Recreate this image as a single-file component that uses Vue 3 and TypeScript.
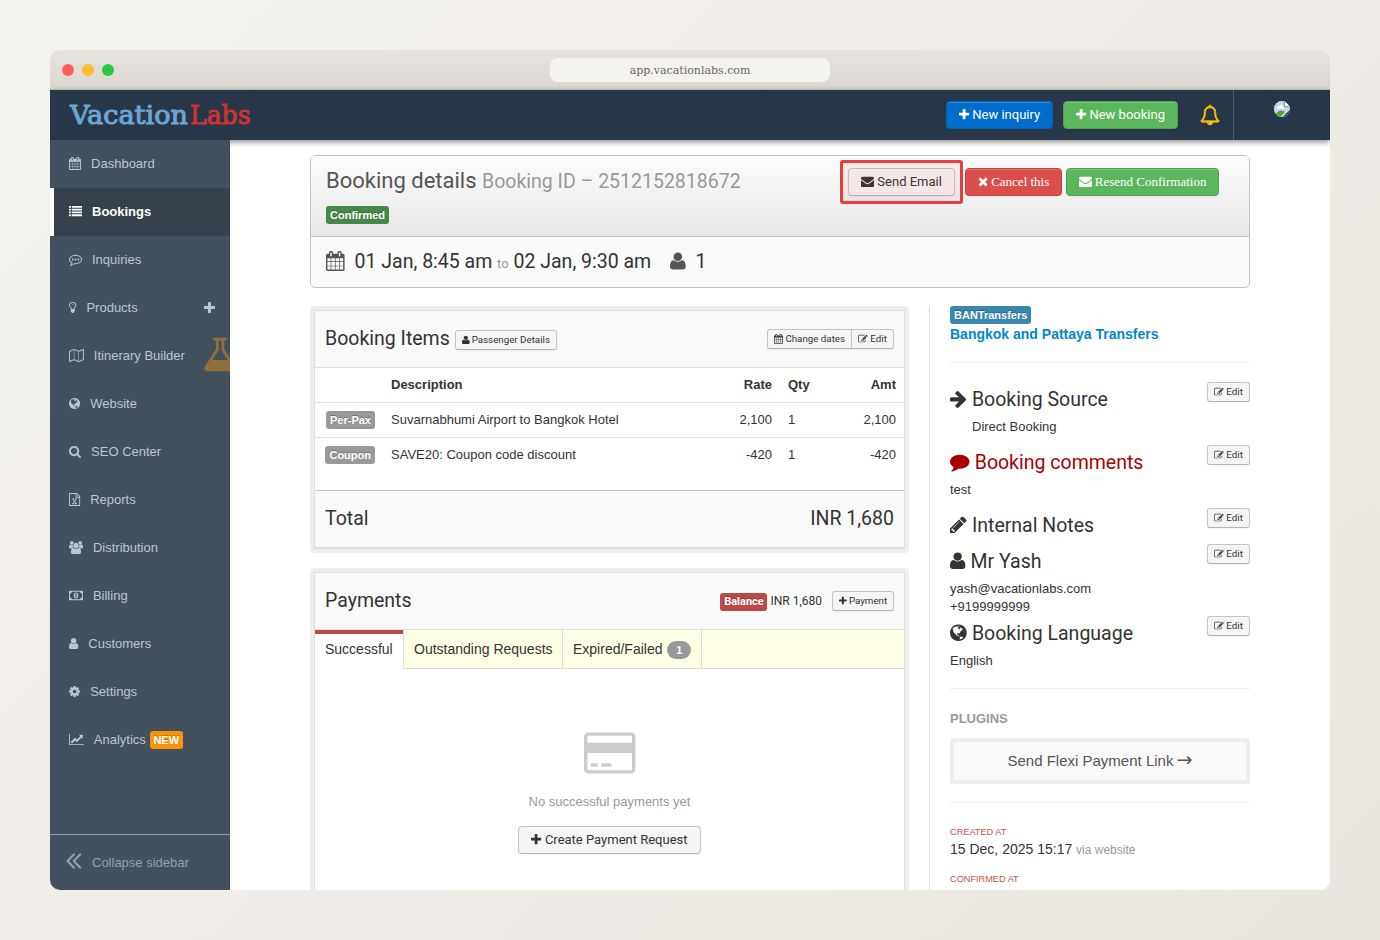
<script setup lang="ts">
import { h, type FunctionalComponent } from 'vue'

interface Glyph { x: number; w: number; d: string; rule?: 'evenodd' }

const glyphs: Record<string, Glyph> = {
  plus: { x: 192, w: 1408, d: 'M1600 736v192q0 40-28 68t-68 28h-416v416q0 40-28 68t-68 28h-192q-40 0-68-28t-28-68v-416h-416q-40 0-68-28t-28-68v-192q0-40 28-68t68-28h416v-416q0-40 28-68t68-28h192q40 0 68 28t28 68v416h416q40 0 68 28t28 68z' },
  envelope: { x: 0, w: 1792, d: 'M1792 710v794q0 66-47 113t-113 47h-1472q-66 0-113-47t-47-113v-794q44 49 101 87 362 246 497 345 57 42 92.5 65.5t94.5 48 110 24.5h2q51 0 110-24.5t94.5-48 92.5-65.5q170-123 498-345 57-39 100-87zm0-294q0 79-49 151t-122 123q-376 261-468 325-10 7-42.5 31t-54 38.5-52 32.5-57.5 27-50 9h-2q-23 0-50-9t-57.5-27-52-32.5-54-38.5-42.5-31q-91-64-262-182.5t-205-142.5q-62-42-117-115.5t-55-136.5q0-78 41.5-130t118.5-52h1472q65 0 112.5 47t47.5 113z' },
  times: { x: 192, w: 1408, d: 'M1490 1322q0 40-28 68l-136 136q-28 28-68 28t-68-28l-294-294-294 294q-28 28-68 28t-68-28l-136-136q-28-28-28-68t28-68l294-294-294-294q-28-28-28-68t28-68l136-136q28-28 68-28t68 28l294 294 294-294q28-28 68-28t68 28l136 136q28 28 28 68t-28 68l-294 294 294 294q28 28 28 68z' },
  user: { x: 256, w: 1280, d: 'M1536 1399q0 109-62.5 187t-150.5 78h-854q-88 0-150.5-78t-62.5-187q0-85 8.5-160.5t31.5-152 58.5-131 94-89 134.5-34.5q131 128 313 128t313-128q76 0 134.5 34.5t94 89 58.5 131 31.5 152 8.5 160.5zm-256-887q0 159-112.5 271.5t-271.5 112.5-271.5-112.5-112.5-271.5 112.5-271.5 271.5-112.5 271.5 112.5 112.5 271.5z' },
  person: { x: 256, w: 1408, d: 'M1664 1405q0 120-73 189.500t-194 69.500h-874q-121 0-194-69.500t-73-189.500q0-53 3.500-103.500t14-109 26.500-108.500 43-97.500 62-81 85.500-53.500 111.500-20q9 0 42 21.500t74.500 48 108 48 133.500 21.500 133.500-21.500 108-48 74.500-48 42-21.500q61 0 111.500 20t85.500 53.500 62 81 43 97.500 26.500 108.500 14 109 3.500 103.500zm-320-893q0 159-112.500 271.500t-271.500 112.500-271.500-112.500-112.500-271.500 112.500-271.500 271.500-112.500 271.500 112.500 112.500 271.500z' },
  calendar: { x: 64, w: 1664, d: 'M192 1664h288v-288h-288v288zm352 0h320v-288h-320v288zm-352-352h288v-320h-288v320zm352 0h320v-320h-320v320zm-352-384h288v-288h-288v288zm736 736h320v-288h-320v288zm-384-736h320v-288h-320v288zm768 736h288v-288h-288v288zm-384-352h320v-320h-320v320zm-352-864v-288q0-13-9.5-22.5t-22.5-9.5h-64q-13 0-22.5 9.5t-9.5 22.5v288q0 13 9.5 22.5t22.5 9.5h64q13 0 22.5-9.5t9.5-22.5zm736 864h288v-320h-288v320zm-384-384h320v-288h-320v288zm384 0h288v-288h-288v288zm32-480v-288q0-13-9.5-22.5t-22.5-9.5h-64q-13 0-22.5 9.5t-9.5 22.5v288q0 13 9.5 22.5t22.5 9.5h64q13 0 22.5-9.5t9.5-22.5zm384-64v1280q0 52-38 90t-90 38h-1408q-52 0-90-38t-38-90v-1280q0-52 38-90t90-38h128v-96q0-66 47-113t113-47h64q66 0 113 47t47 113v96h384v-96q0-66 47-113t113-47h64q66 0 113 47t47 113v96h128q52 0 90 38t38 90z' },
  list: { x: 0, w: 1792, d: 'M0 1280h256v256H0zM0 896h256v256H0zM0 512h256v256H0zM384 1280h1408v256H384zM0 128h256v256H0zM384 896h1408v256H384zM384 512h1408v256H384zM384 128h1408v256H384z' },
  commenting: { x: 0, w: 1792, d: 'M640 896q0 53-37.5 90.5t-90.5 37.5-90.5-37.5-37.5-90.5 37.5-90.5 90.5-37.5 90.5 37.5 37.5 90.5zm384 0q0 53-37.5 90.5t-90.5 37.5-90.5-37.5-37.5-90.5 37.5-90.5 90.5-37.5 90.5 37.5 37.5 90.5zm384 0q0 53-37.5 90.5t-90.5 37.5-90.5-37.5-37.5-90.5 37.5-90.5 90.5-37.5 90.5 37.5 37.5 90.5zm-512-512q-204 0-381.5 69.5t-282 187.5-104.5 255q0 112 71.5 213.5t201.5 175.5l87 50-27 96q-24 91-70 172 152-63 275-171l43-38 57 6q69 8 130 8 204 0 381.5-69.5t282-187.5 104.5-255-104.5-255-282-187.5-381.5-69.5zm896 512q0 174-120 321.5t-326 233-450 85.5q-70 0-145-8-198 175-460 242-49 14-114 22h-5q-15 0-27-10.5t-16-27.5v-1q-3-4-.5-12t2-10 4.5-9.5l6-9 7-8.5 8-9q7-8 31-34.5t34.5-38 31-39.5 32.5-51 27-59 26-76q-157-89-247.5-220t-90.5-281q0-174 120-321.5t326-233 450-85.5 450 85.5 326 233 120 321.5z' },
  comment: { x: 0, w: 1792, d: 'M1792 896q0 174-120 321.5t-326 233-450 85.5q-70 0-145-8-198 175-460 242-49 14-114 22-17 2-30.5-9t-17.5-29v-1q-3-4-.5-12t2-10 4.5-9.5l6-9 7-8.5 8-9q7-8 31-34.5t34.5-38 31-39.5 32.5-51 27-59 26-76q-157-89-247.5-220t-90.5-281q0-130 71-248.5t191-204.5 286-136.5 348-50.5q244 0 450 85.5t326 233 120 321.5z' },
  bulb: { x: 384, w: 1024, d: 'M1120 576q0 13-9.5 22.5t-22.5 9.5-22.5-9.5-9.5-22.5q0-46-54-71t-106-25q-13 0-22.5-9.5t-9.5-22.5 9.5-22.5 22.5-9.5q50 0 99.5 16t87 54 37.5 90zm160 0q0-72-34.5-134t-90-101.5-123-62-136.5-22.5-136.5 22.5-123 62-90 101.5-34.5 134q0 101 68 180 10 11 30.5 33t30.5 33q128 153 141 298h228q13-145 141-298 10-11 30.5-33t30.5-33q68-79 68-180zm128 0q0 155-103 268-45 49-74.5 87t-59.5 95.5-34 107.5q47 28 47 82 0 37-25 64 25 27 25 64 0 52-45 81 13 23 13 47 0 46-31.5 71t-77.5 25q-20 44-60 70t-87 26-87-26-60-70q-46 0-77.5-25t-31.5-71q0-24 13-47-45-29-45-81 0-37 25-64-25-27-25-64 0-54 47-82-4-50-34-107.5t-59.5-95.5-74.5-87q-103-113-103-268 0-99 44.5-184.5t117-142 164-89 186.5-32.5 186.5 32.5 164 89 117 142 44.5 184.5z' },
  map: { x: 0, w: 2048, rule: 'evenodd', d: 'M2020 11q28 20 28 53v1408q0 20-11 36t-29 23l-640 256q-24 11-48 0l-616-246-616 246q-10 5-24 5-19 0-36-11-28-20-28-53V320q0-20 11-36t29-23L680 5q24-11 48 0l616 246L1960 5q32-13 60 6zM736 146v1270l576 230V376zM128 363v1270l544-217V146zM1920 1429V159l-544 217v1270z' },
  globe: { x: 128, w: 1536, d: 'M896 128q209 0 385.5 103t279.5 279.5 103 385.5-103 385.5-279.5 279.5-385.5 103-385.5-103-279.5-279.5-103-385.5 103-385.5 279.5-279.5 385.5-103zm274 521q-2 1-9.5 9.5t-13.5 9.5q2 0 4.5-5t5-11 3.5-7q6-7 22-15 14-6 52-12 34-8 51 11-2-2 9.5-13t14.5-12q3-2 15-4.5t15-7.5l2-22q-12 1-17.5-7t-6.5-21q0 2-6 8 0-7-4.5-8t-11.5 1-9 1q-10-3-15-7.5t-8-16.5-4-15q-2-5-9.5-11t-9.5-10q-1-2-2.5-5.5t-3-6.5-4-5.5-5.5-2.5-7 5-7.5 10-4.5 5q-3-2-6-1.5t-4.5 1-4.5 3-5 3.5q-3 2-8.5 3t-8.5 2q15-5-1-11-10-4-16-3 9-4 7.5-12t-8.5-14h5q-1-4-8.5-8.5t-17.5-8.5-13-6q-8-5-34-9.5t-33-.5q-5 6-4.5 10.5t4 14 3.5 12.5q1 6-5.5 13t-6.5 12q0 7 14 15.5t10 21.5q-3 8-16 16t-16 12q-5 8-1.5 18.5t10.5 16.5q2 2 1.5 4t-3.5 4.5-5.5 4-6.5 3.5l-3 2q-11 5-20.5-6t-13.5-26q-7-25-16-30-23-8-29 1-5-13-41-26-25-9-58-4 6-1 0-15-7-15-19-12 3-6 4-17.5t1-13.5q3-13 12-23 1-1 7-8.5t9.5-13.5.5-6q35 4 50-11 5-5 11.5-17t10.5-17q9-6 14-5.5t14.5 5.5 14.5 5q14 1 15.5-11t-7.5-20q12 1 3-17-4-7-8-9-12-4-27 5-8 4 2 8-1-1-9.5 10.5t-16.5 17.5-16-5q-1-1-5.5-13.5t-9.5-13.5q-8 0-16 15 3-8-11-15t-24-8q19-12-8-27-7-4-20.5-5t-19.5 4q-5 7-5.5 11.5t5 8 10.5 5.5 11.5 4 8.5 3q14 10 8 14-2 1-8.5 3.5t-11.5 4.5-6 4q-3 4 0 14t-2 14q-5-5-9-17.5t-7-16.5q7 9-25 6l-10-1q-4 0-16 2t-20.5 1-13.5-8q-4-8 0-20 1-4 4-2-4-3-11-9.5t-10-8.5q-46 15-94 41 6 1 12-1 5-2 13-6.5t10-5.5q34-14 42-7l5-5q14 16 20 25-7-4-30-1-20 6-22 12 7 12 5 18-4-3-11.5-10t-14.5-11-15-5q-16 0-22 1-146 80-235 222 7 7 12 8 4 1 5 9t2.5 11 11.5-3q9 8 3 19 1-1 44 27 19 17 21 21 3 11-10 18-1-2-9-9t-9-4q-3 5 .5 18.5t10.5 12.5q-7 0-9.5 16t-2.5 35.5-1 23.5l2 1q-3 12 5.5 34.5t21.5 19.5q-13 3 20 43 6 8 8 9 3 2 12 7.5t15 10 10 10.5q4 5 10 22.5t14 23.5q-2 6 9.5 20t10.5 23q-1 0-2.5 1t-2.5 1q3 7 15.5 14t15.5 13q1 3 2 10t3 11 8 2q2-20-24-62-15-25-17-29-3-5-5.5-15.5t-4.5-14.5q2 0 6 1.5t8.5 3.5 7.5 4 2 3q-3 7 2 17.5t12 18.5 17 19 12 13q6 6 14 19.5t0 13.5q9 0 20 10.5t17 19.5q5 8 8 26t5 24q2 7 8.5 13.5t12.5 9.5l16 8 13 7q5 2 18.5 10.5t21.5 11.5q10 4 16 4t14.5-2.5 13.5-3.5q15-2 29 15t21 21q36 19 55 11-2 1 .5 7.5t8 15.5 9 14.5 5.5 8.5q5 6 18 15t18 15q6-4 7-9-3 8 7 20t18 10q14-3 14-32-31 15-49-18 0-1-2.5-5.5t-4-8.5-2.5-8.5 0-7.5 5-3q9 0 10-3.5t-2-12.5-4-13q-1-8-11-20t-12-15q-5 9-16 8t-16-9q0 1-1.5 5.5t-1.5 6.5q-13 0-15-1 1-3 2.5-17.5t3.5-22.5q1-4 5.5-12t7.5-14.5 4-12.5-4.5-9.5-17.5-2.5q-19 1-26 20-1 3-3 10.5t-5 11.5-9 7q-7 3-24 2t-24-5q-13-8-22.5-29t-9.5-37q0-10 2.5-26.5t3-25-5.5-24.5q3-2 9-9.5t10-10.5q2-1 4.5-1.5t4.5 0 4-1.5 3-6q-1-1-4-3-3-3-4-3 7 3 28.5-1.5t27.5 1.5q15 11 22-2 0-1-2.5-9.5t-.5-13.5q5 27 29 9 3 3 15.5 5t17.5 5q3 2 7 5.5t5.5 4.5 5-.5 8.5-6.5q10 14 12 24 11 40 19 44 7 3 11 2t4.5-9.5 0-14-1.5-12.5l-1-8v-18l-1-8q-15-3-18.5-12t1.5-18.5 15-18.5q1-1 8-3.5t15.5-6.5 12.5-8q21-19 15-35 7 0 11-9-1 0-5-3t-7.5-5-4.5-2q9-5 2-16 5-3 7.5-11t7.5-10q9 12 21 2 8-8 1-16 5-7 20.5-10.5t18.5-9.5q7 2 8-2t1-12 3-12q4-5 15-9t13-5l17-11q3-4 0-4 18 2 31-11 10-11-6-20 3-6-3-9.5t-15-5.5q3-1 11.5-.5t10.5-1.5q15-10-7-16-17-5-43 12zm-163 877q206-36 351-189-3-3-12.5-4.5t-12.5-3.5q-18-7-24-8 1-7-2.5-13t-8-9-12.5-8-11-7q-2-2-7-6t-7-5.5-7.5-4.5-8.5-2-10 1l-3 1q-3 1-5.5 2.5t-5.5 3-4 3 0 2.5q-21-17-36-22-5-1-11-5.5t-10.5-7-10-1.5-11.5 7q-5 5-6 15t-2 13q-7-5 0-17.5t2-18.5q-3-6-10.5-4.5t-12 4.5-11.5 8.5-9 6.5-8.5 5.5-8.5 7.5q-3 4-6 12t-5 11q-2-4-11.5-6.5t-9.5-5.5q2 10 4 35t5 38q7 31-12 48-27 25-29 40-4 22 12 26 0 7-8 20.5t-7 21.5q0 6 2 16z' },
  search: { x: 64, w: 1664, d: 'M1216 832q0-185-131.5-316.5t-316.5-131.5-316.5 131.5-131.5 316.5 131.5 316.5 316.5 131.5 316.5-131.5 131.5-316.5zm512 832q0 52-38 90t-90 38q-54 0-90-38l-343-342q-179 124-399 124-143 0-273.5-55.5t-225-150-150-225-55.5-273.5 55.5-273.5 150-225 225-150 273.5-55.5 273.5 55.5 225 150 150 225 55.5 273.5q0 220-124 399l343 343q37 37 37 90z' },
  excel: { x: 128, w: 1536, rule: 'evenodd', d: 'M1596 380q28 28 48 76t20 88v1152q0 40-28 68t-68 28H224q-40 0-68-28t-28-68V96q0-40 28-68t68-28h896q40 0 88 20t76 48zM1152 136v376h376q-10-29-22-41l-313-313q-12-12-41-22zM1536 1664V640h-416q-40 0-68-28t-28-68V128H256v1536zM555 1430v106h281v-106h-75l103-161q5-7 10-16.5t7.5-13.5 3.5-4h2q1 4 5 10 2 4 4.5 7.5t6 8 6.5 8.5l107 161h-76v106h291v-106h-68l-192-273 195-282h67V768H953v107h74l-103 159q-4 7-10 16.5t-9 13.5l-2 3h-2q-1-4-5-10-6-11-17-23L772 875h76V768H557v107h68l189 272-194 283z' },
  group: { x: 0, w: 1920, d: 'M593 896q-162 5-265 128h-134q-82 0-138-40.5t-56-118.5q0-353 124-353 6 0 43.5 21t97.5 42.5 119 21.5q67 0 133-23-5 37-5 66 0 159 93 290zm1071 637q0 120-73 189.5t-194 69.5h-874q-121 0-194-69.5t-73-189.5q0-53 3.5-103.5t14-109 26.5-108.5 43-97.5 62-81 85.5-53.5 111.5-20q10 0 43 21.5t73 48 107 48 135 21.5 135-21.5 107-48 73-48 43-21.5q61 0 111.5 20t85.5 53.5 62 81 43 97.5 26.5 108.5 14 109 3.5 103.5zm-1024-1277q0 106-75 181t-181 75-181-75-75-181 75-181 181-75 181 75 75 181zm704 384q0 159-112.5 271.5t-271.5 112.5-271.5-112.5-112.5-271.5 112.5-271.5 271.5-112.5 271.5 112.5 112.5 271.5zm576 225q0 78-56 118.5t-138 40.5h-134q-103-123-265-128 93-131 93-290 0-29-5-66 66 23 133 23 59 0 119-21.5t97.5-42.5 43.5-21q124 0 124 353zm-128-609q0 106-75 181t-181 75-181-75-75-181 75-181 181-75 181 75 75 181z' },
  money: { x: 0, w: 1920, rule: 'evenodd', d: 'M768 1152h384v-96h-128V608H910L762 745l77 80q42-37 55-57h2v288H768zM1280 896q0 70-21 142t-59.5 134-101.5 101-138 39-138-39-101.5-101T661 1038t-21-142 21-142 59.5-134T822 519t138-39 138 39 101.5 101T1259 754t21 142zM1792 1152V640q-106 0-181-75t-75-181H384q0 106-75 181t-181 75v512q106 0 181 75t75 181h1152q0-106 75-181t181-75zM1920 320v1152q0 26-19 45t-45 19H64q-26 0-45-19t-19-45V320q0-26 19-45t45-19h1792q26 0 45 19t19 45z' },
  cog: { x: 128, w: 1536, d: 'M1152 896q0-106-75-181t-181-75-181 75-75 181 75 181 181 75 181-75 75-181zm512-109v222q0 12-8 23t-20 13l-185 28q-19 54-39 91 35 50 107 138 10 12 10 25t-9 23q-27 37-99 108t-94 71q-12 0-26-9l-138-108q-44 23-91 38-16 136-29 186-7 28-36 28h-222q-14 0-24.5-8.5t-11.5-21.5l-28-184q-49-16-90-37l-141 107q-10 9-25 9-14 0-25-11-126-114-165-168-7-10-7-23 0-12 8-23 15-21 51-66.5t54-70.5q-27-50-41-99l-183-27q-13-2-21-12.5t-8-23.5v-222q0-12 8-23t19-13l186-28q14-46 39-92-40-57-107-138-10-12-10-24 0-10 9-23 26-36 98.5-107.5t94.5-71.5q13 0 26 10l138 107q44-23 91-38 16-136 29-186 7-28 36-28h222q14 0 24.5 8.5t11.5 21.5l28 184q49 16 90 37l142-107q9-9 24-9 13 0 25 10 129 119 165 170 7 8 7 22 0 12-8 23-15 21-51 66.5t-54 70.5q26 50 41 98l183 28q13 2 21 12.5t8 23.5z' },
  chart: { x: 0, w: 2048, d: 'M2048 1536v128h-2048v-1536h128v1408h1920zm-128-1248v435q0 21-19.5 29.5t-35.5-7.5l-121-121-633 633q-10 10-23 10t-23-10l-233-233-416 416-192-192 585-585q10-10 23-10t23 10l233 233 464-464-121-121q-16-16-7.5-35.5t29.5-19.5h435q14 0 23 9t9 23z' },
  edit: { x: 0, w: 1792, d: 'M888 1184l116-116-152-152-116 116v56h96v96h56zm440-720q-16-16-33 1l-350 350q-17 17-1 33t33-1l350-350q17-17 1-33zm80 594v190q0 119-84.5 203.5t-203.5 84.5h-832q-119 0-203.5-84.5t-84.5-203.5v-832q0-119 84.5-203.5t203.5-84.5h832q63 0 117 25 15 7 18 23 3 17-9 29l-49 49q-14 14-32 8-23-6-45-6h-832q-66 0-113 47t-47 113v832q0 66 47 113t113 47h832q66 0 113-47t47-113v-126q0-13 9-22l64-64q15-15 35-7t20 29zm-96-738l288 288-672 672h-288v-288zm444 132l-92 92-288-288 92-92q28-28 68-28t68 28l152 152q28 28 28 68t-28 68z' },
  arrow: { x: 128, w: 1536, d: 'M1600 960q0 54-37 91l-651 651q-39 37-91 37-51 0-90-37l-75-75q-38-38-38-91t38-91l293-293h-704q-52 0-84.5-37.5t-32.5-90.5v-128q0-53 32.5-90.5t84.5-37.5h704l-293-294q-38-36-38-90t38-90l75-75q38-38 90-38 53 0 91 38l651 651q37 35 37 90z' },
  pencil: { x: 128, w: 1536, d: 'M491 1536l91-91-235-235-91 91v107h128v128h107zm523-928q0-22-22-22-10 0-17 7l-542 542q-7 7-7 17 0 22 22 22 10 0 17-7l542-542q7-7 7-17zm-54-192l416 416-832 832h-416v-416zm683 96q0 53-37 90l-166 166-416-416 166-165q36-38 90-38 53 0 91 38l235 234q37 39 37 91z' },
  bell: { x: 0, w: 1792, d: 'M912 1696q0-16-16-16-59 0-101.5-42.5t-42.5-101.5q0-16-16-16t-16 16q0 73 51.5 124.5t124.5 51.5q16 0 16-16zm-666-288h1300q-266-300-266-832 0-51-24-105t-69-103-121.5-80.5-169.5-31.5-169.5 31.5-121.5 80.5-69 103-24 105q0 532-266 832zm1482 0q0 52-38 90t-90 38h-448q0 106-75 181t-181 75-181-75-75-181h-448q-52 0-90-38t-38-90q50-42 91-88t85-119.5 74.5-158.5 50-206 19.5-260q0-152 117-282.5t307-158.5q-8-19-8-39 0-40 28-68t68-28 68 28 28 68q0 20-8 39 190 28 307 158.5t117 282.5q0 139 19.5 260t50 206 74.5 158.5 85 119.5 91 88z' },
  flask: { x: 64, w: 1664, d: 'M1591 1448q56 89 21.5 152.5t-140.5 63.5h-1152q-106 0-140.5-63.5t21.5-152.5l503-793v-399h-64q-26 0-45-19t-19-45 19-45 45-19h512q26 0 45 19t19 45-19 45-45 19h-64v399zm-779-725l-272 429h712l-272-429-20-31v-436h-128v436z' },
  card: { x: 0, w: 1920, rule: 'evenodd', d: 'M1760 128q66 0 113 47t47 113v1216q0 66-47 113t-113 47H160q-66 0-113-47T0 1504V288q0-66 47-113t113-47zM160 256q-13 0-22.5 9.5T128 288v224h1664V288q0-13-9.5-22.5T1760 256zM1760 1536q13 0 22.5-9.5t9.5-22.5V896H128v608q0 13 9.5 22.5t22.5 9.5zM256 1408v-128h256v128zM640 1408v-128h384v128z' },
}

const Icon: FunctionalComponent<{ name: string }> = (props) => {
  const g = glyphs[props.name]
  return h('svg', { class: 'icon', viewBox: `${g.x} 0 ${g.w} 1792`, width: `${g.w / 1792}em`, height: '1em', 'aria-hidden': 'true' }, [
    h('path', { d: g.d, fill: 'currentColor', 'fill-rule': g.rule ?? 'nonzero' }),
  ])
}
Icon.props = ['name']

interface NavItem { icon: string; label: string; active?: boolean; badge?: string; expandable?: boolean; beta?: boolean }
const nav: NavItem[] = [
  { icon: 'calendar', label: 'Dashboard' },
  { icon: 'list', label: 'Bookings', active: true },
  { icon: 'commenting', label: 'Inquiries' },
  { icon: 'bulb', label: 'Products', expandable: true },
  { icon: 'map', label: 'Itinerary Builder', beta: true },
  { icon: 'globe', label: 'Website' },
  { icon: 'search', label: 'SEO Center' },
  { icon: 'excel', label: 'Reports' },
  { icon: 'group', label: 'Distribution' },
  { icon: 'money', label: 'Billing' },
  { icon: 'user', label: 'Customers' },
  { icon: 'cog', label: 'Settings' },
  { icon: 'chart', label: 'Analytics', badge: 'NEW' },
]

const items = [
  { kind: 'Per-Pax', description: 'Suvarnabhumi Airport to Bangkok Hotel', rate: '2,100', qty: 1, amount: '2,100' },
  { kind: 'Coupon', description: 'SAVE20: Coupon code discount', rate: '-420', qty: 1, amount: '-420' },
]

const sections = [
  { icon: 'arrow', title: 'Booking Source', lines: ['Direct Booking'], kind: 'indented spaced' },
  { icon: 'comment', title: 'Booking comments', lines: ['test'], kind: 'alert spaced' },
  { icon: 'pencil', title: 'Internal Notes', lines: [], kind: '' },
  { icon: 'person', title: 'Mr Yash', lines: ['yash@vacationlabs.com', '+9199999999'], kind: '' },
  { icon: 'globe', title: 'Booking Language', lines: ['English'], kind: '' },
]
</script>

<template>
  <div class="stage">
    <div class="window">
      <div class="titlebar">
        <div class="lights"><i class="red"></i><i class="amber"></i><i class="green"></i></div>
        <div class="address">app.vacationlabs.com</div>
      </div>

      <header class="topbar">
        <svg class="logo" width="190" height="34" viewBox="0 0 190 34" aria-label="VacationLabs">
          <text class="logo-a" x="1" y="25.500" textLength="118" lengthAdjust="spacingAndGlyphs">Vacation</text>
          <text class="logo-b" x="121" y="25.500" textLength="60.500" lengthAdjust="spacingAndGlyphs">Labs</text>
        </svg>
        <div class="top-actions">
          <button class="btn blue inquiry"><Icon name="plus" /> New inquiry</button>
          <button class="btn green new-booking"><Icon name="plus" /> New booking</button>
          <span class="bell"><Icon name="bell" /></span>
          <div class="account">
            <svg class="avatar" width="16" height="16" viewBox="0 0 16 16">
              <clipPath id="round"><circle cx="8" cy="8" r="8" /></clipPath>
              <g clip-path="url(#round)">
                <path d="M0 0h10.5L16 5.5V16H0z" fill="#c3d5f3" />
                <path d="M0 0h10v6h6v10H0z" fill="none" stroke="#c9ccd1" stroke-width="1.6" />
                <path d="M3 7.2q0-2 2-2 .7-2 2.4-1.3Q9.200 4.300 9 6q1.400.2 1 1.600H3z" fill="#fff" />
                <path d="M1 15q2-5.500 6.500-5.500Q10 9.500 11 11l-4.500 5H1z" fill="#54a933" />
                <path d="M10.500 0v5.500H16" fill="#fff" stroke="#8f959b" stroke-width="1" />
                <path d="M16 8.800V11L11.200 16H8.800z" fill="#283747" />
              </g>
            </svg>
          </div>
        </div>
      </header>

      <div class="body">
        <nav class="sidebar">
          <a v-for="item in nav" :key="item.label" class="nav-item" :class="{ active: item.active }">
            <Icon :name="item.icon" /><span class="nav-label">{{ item.label }}</span>
            <span v-if="item.badge" class="label orange">{{ item.badge }}</span>
            <span v-if="item.expandable" class="expand"><Icon name="plus" /></span>
            <span v-if="item.beta" class="beta"><Icon name="flask" /></span>
          </a>
          <a class="collapse">
            <svg width="16" height="16" viewBox="0 0 16 16" fill="none" stroke="currentColor" stroke-width="2"><path d="M8.500.8 1.500 8l7 7.200M14.800.8 7.800 8l7 7.200" /></svg>
            <span>Collapse sidebar</span>
          </a>
        </nav>

        <main class="content">
          <section class="summary">
            <div class="summary-head">
              <div>
                <h1>Booking details <small>Booking ID – 2512152818672</small></h1>
                <span class="label success">Confirmed</span>
              </div>
              <div class="summary-actions">
                <div class="send"><button class="btn light">
                  <Icon name="envelope" /> Send Email</button><span class="highlight"></span></div>
                <button class="btn danger serif"><Icon name="times" /> Cancel this</button>
                <button class="btn green serif resend"><Icon name="envelope" /> Resend Confirmation</button>
              </div>
            </div>
            <div class="dates">
              <span class="grey"><Icon name="calendar" /></span>
              <span class="when">01 Jan, 8:45 am <small>to</small> 02 Jan, 9:30 am</span>
              <span class="grey person"><Icon name="person" /></span>
              <span class="pax">1</span>
            </div>
          </section>

          <div class="columns">
            <div class="primary">
              <section class="box">
                <div class="box-inner closed">
                  <header class="box-head">
                    <h2>Booking Items</h2>
                    <button class="btn light mini passenger"><Icon name="person" /> Passenger Details</button>
                    <div class="group">
                      <button class="btn light mini change"><Icon name="calendar" /> Change dates</button>
                      <button class="btn light mini edit"><Icon name="edit" /> Edit</button>
                    </div>
                  </header>
                  <div class="row heading"><span></span><span>Description</span><span class="num">Rate</span><span>Qty</span><span class="num">Amt</span></div>
                  <div v-for="row in items" :key="row.kind" class="row">
                    <span class="num"><span class="label">{{ row.kind }}</span></span>
                    <span>{{ row.description }}</span>
                    <span class="num">{{ row.rate }}</span>
                    <span>{{ row.qty }}</span>
                    <span class="num">{{ row.amount }}</span>
                  </div>
                  <div class="total"><span>Total</span><span>INR 1,680</span></div>
                </div>
              </section>

              <section class="box payments">
                <div class="box-inner">
                  <header class="box-head">
                    <h2>Payments</h2>
                    <div class="balance">
                      <span class="label red">Balance</span><span class="sum">INR 1,680</span>
                      <button class="btn light mini pay"><Icon name="plus" /> Payment</button>
                    </div>
                  </header>
                  <div class="tabs">
                    <a class="tab current">Successful</a>
                    <a class="tab outstanding">Outstanding Requests</a>
                    <a class="tab">Expired/Failed <span class="count">1</span></a>
                    <span class="tab-fill"></span>
                  </div>
                  <div class="empty">
                    <span class="card"><Icon name="card" /></span>
                    <p>No successful payments yet</p>
                    <button class="btn light create"><Icon name="plus" /> Create Payment Request</button>
                  </div>
                </div>
              </section>
            </div>

            <aside class="aside">
              <span class="label info">BANTransfers</span>
              <a class="trip">Bangkok and Pattaya Transfers</a>
              <hr class="first">
              <section v-for="s in sections" :key="s.title" class="info-block" :class="s.kind">
                <div class="info-head">
                  <h2><Icon :name="s.icon" /> {{ s.title }}</h2>
                  <button class="btn light mini edit"><Icon name="edit" /> Edit</button>
                </div>
                <p v-for="line in s.lines" :key="line">{{ line }}</p>
              </section>
              <hr class="second">
              <h5>PLUGINS</h5>
              <a class="plugin">Send Flexi Payment Link <span class="to">→</span></a>
              <hr class="third">
              <h6>CREATED AT</h6>
              <p class="stamp">15 Dec, 2025 15:17 <small>via website</small></p>
              <h6>CONFIRMED AT</h6>
            </aside>
          </div>
        </main>
      </div>
    </div>
  </div>
</template>

<style>
html, body { margin: 0; overflow: hidden; }
</style>

<style scoped>
.stage { box-sizing: border-box; width: 1380px; height: 940px; padding: 50px; overflow: hidden; background: linear-gradient(135deg, #f5f3ef 0%, #f0ede8 50%, #eae6df 100%); font: 13px/18px "Liberation Sans", Arial, sans-serif; color: #333; white-space: nowrap; }
.stage * { box-sizing: border-box; }
.window { display: flex; flex-direction: column; width: 1280px; height: 840px; overflow: hidden; border-radius: 10px; background: #fff; }
.icon { vertical-align: -0.143em; overflow: visible; flex: none; }
h1, h2, h5, h6, p { margin: 0; }
h1, h2 { font-family: Roboto, sans-serif; font-weight: 400; }

.titlebar { display: grid; grid-template-columns: 1fr 280px 1fr; align-items: center; height: 40px; flex: none; padding: 0 12px; border-bottom: 1px solid #c8c4bd; background: linear-gradient(#e8e4df, #d9d5cf); }
.lights { display: flex; gap: 8px; }
.lights i { width: 12px; height: 12px; border-radius: 50%; }
.red { background: #ff5f57; }
.amber { background: #febc2e; }
.green { background: #28c840; }
.address { height: 24px; margin-top: 1px; border-radius: 8px; background: #f5f3f0; color: #6b6660; font: 11px/25px "DejaVu Serif", serif; text-align: center; }

.topbar { position: relative; z-index: 2; display: flex; justify-content: space-between; height: 50px; flex: none; background: #283747; box-shadow: 0 2px 6px rgba(0, 0, 0, .45); }
.logo { margin: 8px 0 0 19px; font-family: "DejaVu Serif", serif; font-size: 26px; }
.logo-a { fill: #6ba6d3; stroke: #6ba6d3; stroke-width: 1; }
.logo-b { fill: #cb3338; stroke: #cb3338; stroke-width: 1; }
.top-actions { display: flex; align-items: center; }
.new-booking { margin-left: 10px; }
.bell { width: 20px; margin: 0 13px 0 22px; color: #ffc107; font-size: 20px; line-height: 20px; }
.bell .icon { stroke: currentColor; stroke-width: 60; }
.account { width: 97px; height: 50px; padding: 11px 0 0 40px; border-left: 1px solid #4d5d6c; }
.avatar { display: block; }

.btn { display: inline-block; height: 28px; padding: 0; border: 1px solid rgba(0, 0, 0, .2); border-bottom-color: rgba(0, 0, 0, .3); border-radius: 4px; font: 13px/24px Roboto, sans-serif; text-align: center; white-space: nowrap; box-shadow: inset 0 1px 0 rgba(255, 255, 255, .2), 0 1px 2px rgba(0, 0, 0, .05); }
.blue { width: 107px; background: #006dcc; color: #fff; border-color: #0062b8; }
.btn.green { width: 115px; background: #5bb75b; color: #fff; border-color: #50a150; }
.danger { width: 97px; background: #da4f4a; color: #fff; border-color: #bf4541; }
.light { background: #f5f5f5; color: #333; border-color: #c4c4c4 #c4c4c4 #b3b3b3; }
.btn.serif { font-family: "Liberation Serif", serif; font-size: 13px; }
.btn.resend { width: 153px; margin-left: 4px; }
.mini { height: 20px; padding-bottom: 1px; border-radius: 3px; font-size: 9.75px; line-height: 17px; }
.edit { width: 43px; }

.body { display: flex; flex: 1; min-height: 0; }
.sidebar { position: relative; z-index: 3; display: flex; flex-direction: column; width: 180px; flex: none; background: #42515d; color: #bac7ce; }
.nav-item { display: flex; align-items: center; height: 48px; flex: none; padding-left: 19px; overflow: hidden; }
.nav-item > .icon { margin-bottom: 2px; }
.nav-label { margin-left: 10px; }
.nav-item.active { padding-left: 15px; border-left: 4px solid #fff; background: #36414b; color: #fff; font-weight: 700; }
.expand { margin: 0 15px 0 auto; font-size: 14px; }
.beta { display: flex; margin: 0 -8px 4px auto; color: #916f3c; font-size: 39px; }
.collapse { display: flex; align-items: center; gap: 10px; height: 56px; margin-top: auto; padding-left: 16px; border-top: 1px solid #93a0ac; color: #93a1b1; }
.collapse svg { margin-bottom: 3px; }

.label { display: inline-block; height: 18px; padding: 2px 4px; border-radius: 3px; background: #999; color: #fff; font: bold 11px/14px "Liberation Sans", Arial, sans-serif; text-shadow: 0 -1px 0 rgba(0, 0, 0, .25); }
.orange { width: 33px; margin-left: 4px; padding: 2px 3.500px; background: #f89406; }
.success { background: #468847; }
.label.red { width: 47px; padding: 2px 0; background: #b94a48; font-family: Roboto, sans-serif; text-align: center; }
.info { background: #3a87ad; }

.content { flex: 1; padding: 15px 80px 0; overflow: hidden; }
.summary { height: 133px; border: 1px solid #c5c5c5; border-radius: 5px; background: #fafafa; }
.summary-head { display: flex; justify-content: space-between; height: 81px; padding: 12px 30px 0 15px; border-bottom: 1px solid #c5c5c5; border-radius: 4px 4px 0 0; background: linear-gradient(#fcfcfc, #e8e8e8); }
h1 { height: 38px; color: #555; font-size: 22px; line-height: 26px; }
h1 small { color: #999; font-size: 19.5px; }
.summary-actions { display: flex; align-items: flex-start; }
.send { position: relative; display: flex; margin-right: 10px; }
.send .btn { width: 107px; }
.highlight { position: absolute; top: -8px; left: -8px; width: 123px; height: 44px; border: 3px solid #e53e3e; border-radius: 3px; background: rgba(229, 62, 62, .07); }
.dates { display: flex; align-items: center; height: 50px; padding-left: 15px; font: 19.5px/26px Roboto, sans-serif; }
.grey { color: #555; }
.dates .grey { margin-bottom: 2px; font-size: 20px; }
.when { margin: 2px 0 0 10px; }
.when small { color: #999; font-size: 13px; }
.dates .grey.person { margin: 0 10px 1px 18.500px; }

.columns { display: grid; grid-template-columns: 599px 321px; gap: 20px; margin-top: 18px; }
.box { border: 4px solid #eee; border-radius: 4px; }
.box-inner { border: 1px solid #ddd; }
.box-inner.closed { border-bottom-width: 2px; }
.payments { margin-top: 15px; height: 400px; }
.payments .box-inner { height: 392px; }
.box-head { display: flex; align-items: flex-start; height: 57px; padding: 0 10px; border-bottom: 1px solid #ddd; background: #f9f9f9; }
h2 { font-size: 19.5px; line-height: 56px; }
.passenger { width: 102px; margin: 19px 0 0 5px; }
.group { display: flex; margin: 18px 0 0 auto; }
.change { width: 85px; border-radius: 3px 0 0 3px; }
.group .edit { margin-left: -1px; border-radius: 0 3px 3px 0; }
.row { display: grid; grid-template-columns: 60px 1fr 60px 40px 52px; gap: 16px; align-items: center; height: 35px; padding-right: 8px; border-bottom: 1px solid #ddd; }
.row:nth-last-child(2) { height: 34px; border-bottom: 0; }
.heading { font-weight: 700; }
.num { text-align: right; }
.row .label { vertical-align: middle; }
.total { display: flex; justify-content: space-between; height: 57px; margin-top: 18px; padding: 0 10px; border-top: 1px solid #c5c5c5; background: #f9f9f9; font: 19.5px/55px Roboto, sans-serif; }
.balance { display: flex; margin: 18px 0 0 auto; }
.balance .label { margin-top: 2px; }
.sum { margin: 1px 10px 0 3px; font: 12px/18px Roboto, sans-serif; }
.pay { width: 62px; }

.tabs { display: flex; height: 39px; font-size: 14px; line-height: 38px; }
.tab { padding: 0 10px; border-right: 1px solid #ddd; border-bottom: 1px solid #ddd; background: #ffffe5; }
.tab.current { width: 89px; border-bottom: 0; background: #fff; box-shadow: inset 0 4px #b94a48; }
.tab.outstanding { width: 159px; }
.tab-fill { flex: 1; border-bottom: 1px solid #ddd; background: #ffffe5; }
.count { display: inline-block; width: 24px; height: 18px; margin-left: 1px; border-radius: 9px; background: #999; color: #fff; font: bold 11px/18px "Liberation Sans", Arial, sans-serif; text-align: center; }
.empty { display: flex; flex-direction: column; align-items: center; padding-top: 60px; color: #999; }
.card { height: 48px; color: #ccc; font-size: 48px; line-height: 48px; }
.empty p { margin: 16px 0 15px; }
.create { width: 183px; }

.aside { display: flex; flex-direction: column; height: 620px; padding-left: 20px; border-left: 1px solid #ddd; }
.info { align-self: flex-start; }
.trip { margin-top: 1px; color: #0088cc; font-size: 14px; font-weight: 700; }
hr { width: 100%; height: 1px; flex: none; margin: 0; border: 0; background: #eee; }
.first { margin: 19px 0; }
.info-head { display: flex; justify-content: space-between; }
.info-head h2 { line-height: 36px; }
.info-head h2 .icon { margin-right: .4px; }
.spaced { padding-bottom: 9px; }
.alert h2 { color: #a00; }
.indented p { padding-left: 22px; }
.second { margin: 18px 0 21px; }
h5 { color: #999; font-size: 13px; line-height: 18px; }
.plugin { height: 46px; flex: none; margin: 10px 0 18px; border: 4px solid #eee; border-radius: 3px; background: #f9f9f9; color: #555; font-size: 15px; line-height: 38px; text-align: center; }
.to { margin-left: -1px; font-family: "DejaVu Sans", sans-serif; font-size: 19px; line-height: 1; }
.third { margin-bottom: 20px; }
h6 { color: #c8504e; font-size: 9.2px; font-weight: 400; line-height: 18px; }
.stamp { margin: -1px 0 11px; font-size: 14px; }
.stamp small { color: #999; font-size: 12px; }
</style>
